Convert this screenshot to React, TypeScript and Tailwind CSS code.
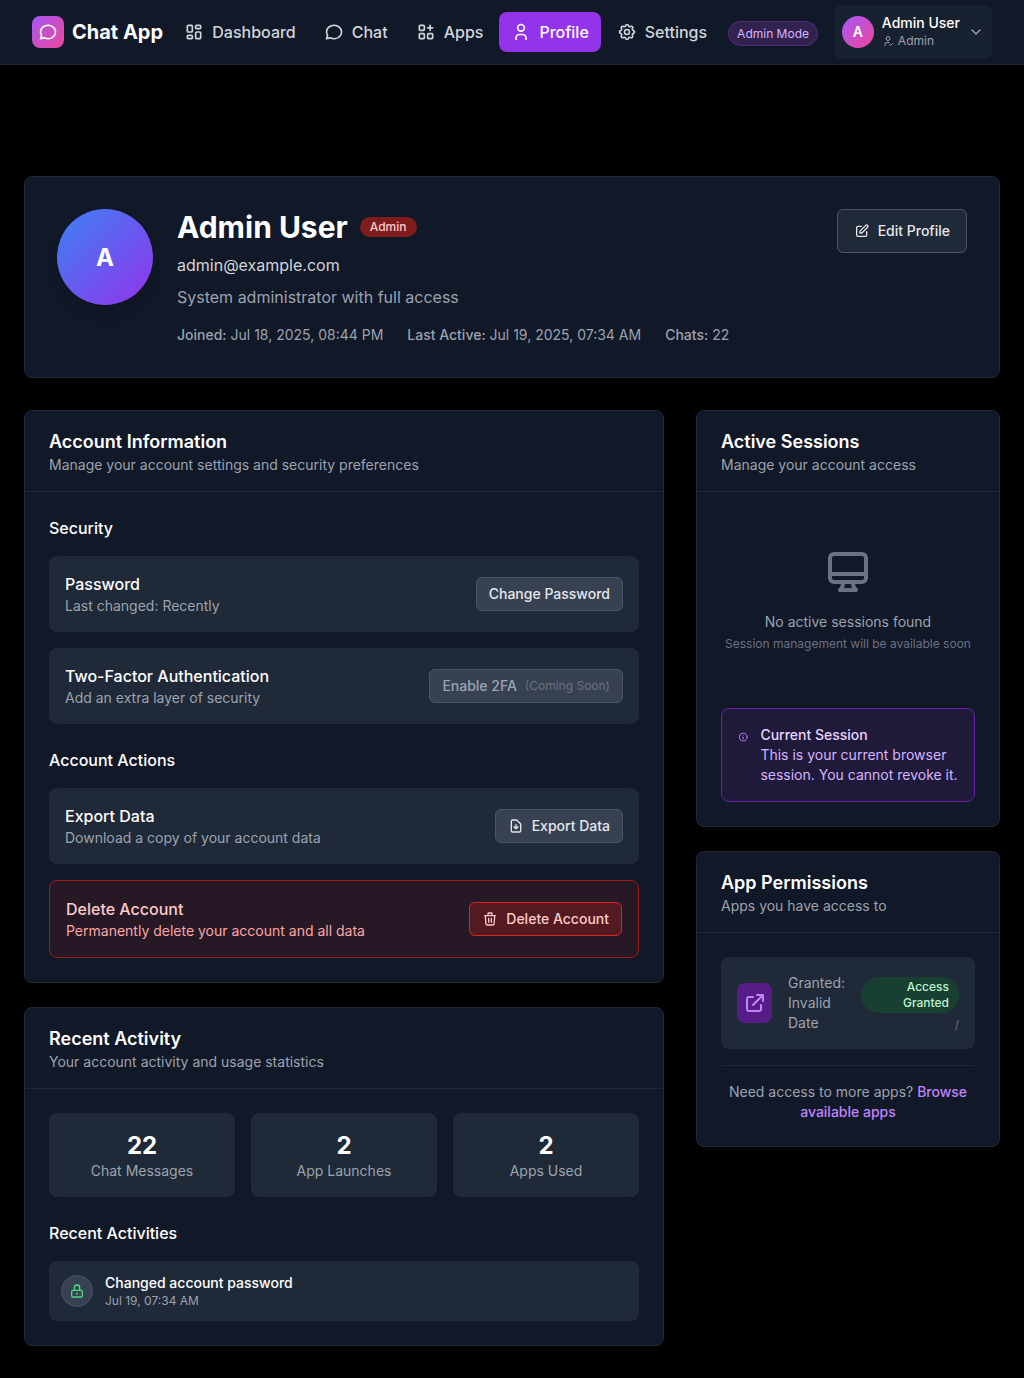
import type { ReactNode } from "react";
import {
  HiOutlineDesktopComputer,
  HiOutlineDocumentDownload,
  HiOutlineExternalLink,
  HiOutlineInformationCircle,
  HiOutlineLockClosed,
  HiOutlinePencilAlt,
  HiOutlineTrash,
} from "react-icons/hi";
import {
  TbApps,
  TbChevronDown,
  TbLayoutDashboard,
  TbMessageCircle,
  TbSettings,
  TbUser,
  TbUserCheck,
} from "react-icons/tb";

const navItems = [
  { label: "Dashboard", Icon: TbLayoutDashboard, active: false },
  { label: "Chat", Icon: TbMessageCircle, active: false },
  { label: "Apps", Icon: TbApps, active: false },
  { label: "Profile", Icon: TbUser, active: true },
  { label: "Settings", Icon: TbSettings, active: false },
];

const profileFacts = [
  { label: "Joined:", value: "Jul 18, 2025, 08:44 PM" },
  { label: "Last Active:", value: "Jul 19, 2025, 07:34 AM" },
  { label: "Chats:", value: "22" },
];

const stats = [
  { value: "22", label: "Chat Messages" },
  { value: "2", label: "App Launches" },
  { value: "2", label: "Apps Used" },
];

function Navbar() {
  return (
    <nav className="flex h-[65px] items-center border-b border-[#1f2937] bg-[#111827] px-8">
      <div className="flex w-[140.3px] shrink-0 items-center gap-2">
        <div className="flex size-8 items-center justify-center rounded-lg bg-linear-to-br/srgb from-[#a855f7] to-[#ec4899]">
          <TbMessageCircle className="size-5 text-white" />
        </div>
        <span className="text-xl font-bold whitespace-nowrap text-white">Chat App</span>
      </div>
      <div className="flex shrink-0 items-center gap-1">
        {navItems.map(({ label, Icon, active }) => (
          <a
            key={label}
            className={
              active
                ? "flex items-center gap-2 rounded-lg bg-[#9333ea] px-3 py-2 font-medium text-white"
                : "flex items-center gap-2 rounded-lg px-3 py-2 font-medium text-[#d1d5db]"
            }
          >
            <Icon className="size-5" />
            {label}
          </a>
        ))}
      </div>
      <div className="ml-auto flex shrink-0 items-center gap-4">
        <span className="mt-[3px] rounded-full border border-[#4f2d7a] bg-[#31224f] px-2 py-[3.5px] text-xs text-[#d8b4fe]">
          Admin Mode
        </span>
        <div className="flex h-[54px] w-[158px] items-center gap-2 rounded-lg bg-[#1f2937]/50 px-2">
          <div className="flex size-8 items-center justify-center rounded-full bg-linear-to-br/srgb from-[#a855f7] to-[#ec4899] text-sm font-semibold text-white">
            A
          </div>
          <div className="pb-0.5 whitespace-nowrap">
            <p className="text-sm font-medium text-white">Admin User</p>
            <p className="flex items-center gap-1 text-xs text-[#9ca3af]">
              <TbUserCheck className="size-3" />
              Admin
            </p>
          </div>
          <TbChevronDown className="ml-auto size-4 shrink-0 text-[#9ca3af]" />
        </div>
      </div>
    </nav>
  );
}

function Card({ title, subtitle, children }: { title: string; subtitle: string; children: ReactNode }) {
  return (
    <section className="rounded-lg border border-[#1f2937] bg-[#111827]">
      <header className="border-b border-[#1f2937] px-6 py-4">
        <h2 className="pt-px text-lg leading-[27px] font-semibold text-white">{title}</h2>
        <p className="text-sm text-[#9ca3af]">{subtitle}</p>
      </header>
      <div className="p-6">{children}</div>
    </section>
  );
}

function SettingRow({ title, text, children }: { title: string; text: string; children: ReactNode }) {
  return (
    <div className="flex items-center justify-between rounded-lg bg-[#1f2937] p-4">
      <div>
        <h4 className="font-medium text-white">{title}</h4>
        <p className="text-sm text-[#9ca3af]">{text}</p>
      </div>
      {children}
    </div>
  );
}

function ProfileHeader() {
  return (
    <section className="flex items-start rounded-lg border border-[#1f2937] bg-[#111827] p-8">
      <div className="flex size-24 items-center justify-center rounded-full bg-linear-to-br/srgb from-[#3b82f6] to-[#9333ea] pt-0.5 text-2xl font-bold text-white shadow-lg">
        A
      </div>
      <div className="ml-6 flex-1">
        <div className="flex items-center gap-3">
          <h1 className="text-3xl font-bold text-white">Admin User</h1>
          <span className="rounded-full bg-[#7f1d1d] px-2.5 py-0.5 text-xs font-medium text-[#fecaca]">Admin</span>
        </div>
        <p className="mt-2 text-[#d1d5db]">admin@example.com</p>
        <p className="mt-2 text-[#9ca3af]">System administrator with full access</p>
        <div className="mt-4 flex gap-6 text-sm text-[#9ca3af]">
          {profileFacts.map((fact) => (
            <p key={fact.label}>
              <span className="font-medium">{fact.label}</span> {fact.value}
            </p>
          ))}
        </div>
      </div>
      <button className="flex items-center gap-2 rounded-md border border-[#4b5563] bg-[#1f2937] px-4 py-[11px] text-sm font-medium text-[#e5e7eb]">
        <HiOutlinePencilAlt className="size-4" />
        Edit Profile
      </button>
    </section>
  );
}

function AccountCard() {
  return (
    <Card title="Account Information" subtitle="Manage your account settings and security preferences">
      <h3 className="font-medium text-white">Security</h3>
      <div className="mt-4 space-y-4">
        <SettingRow title="Password" text="Last changed: Recently">
          <button className="rounded-md border border-[#4b5563] bg-[#374151] px-3 py-1.5 text-sm font-medium text-[#e5e7eb]">
            Change Password
          </button>
        </SettingRow>
        <SettingRow title="Two-Factor Authentication" text="Add an extra layer of security">
          <button className="flex items-center gap-2 rounded-md border border-[#4b5563] bg-[#374151] px-3 py-1.5 text-sm font-medium text-[#9ca3af]">
            Enable 2FA <span className="text-xs font-normal text-[#6b7280]">(Coming Soon)</span>
          </button>
        </SettingRow>
      </div>
      <h3 className="mt-6 font-medium text-white">Account Actions</h3>
      <div className="mt-4 space-y-4">
        <SettingRow title="Export Data" text="Download a copy of your account data">
          <button className="flex items-center gap-2 rounded-md border border-[#4b5563] bg-[#374151] px-3 py-1.5 text-sm font-medium text-[#e5e7eb]">
            <HiOutlineDocumentDownload className="size-4" />
            Export Data
          </button>
        </SettingRow>
        <div className="flex items-center justify-between rounded-lg border border-[#991b1b] bg-[#7f1d1d]/20 p-4">
          <div>
            <h4 className="font-medium text-[#fecaca]">Delete Account</h4>
            <p className="text-sm text-[#fca5a5]">Permanently delete your account and all data</p>
          </div>
          <button className="flex items-center gap-2 rounded-md border border-[#dc2626] bg-[#7f1d1d]/50 px-3 py-1.5 text-sm font-medium text-[#fecaca]">
            <HiOutlineTrash className="size-4" />
            Delete Account
          </button>
        </div>
      </div>
    </Card>
  );
}

function ActivityCard() {
  return (
    <Card title="Recent Activity" subtitle="Your account activity and usage statistics">
      <div className="grid grid-cols-3 gap-4">
        {stats.map((stat) => (
          <div key={stat.label} className="rounded-lg bg-[#1f2937] p-4 text-center">
            <p className="pt-px text-2xl leading-[31px] font-bold text-white">{stat.value}</p>
            <p className="text-sm text-[#9ca3af]">{stat.label}</p>
          </div>
        ))}
      </div>
      <h3 className="mt-6 font-medium text-white">Recent Activities</h3>
      <div className="mt-4 flex items-center gap-3 rounded-lg bg-[#1f2937] p-3">
        <div className="flex size-8 items-center justify-center rounded-full border border-[#4b5563] bg-[#374151]">
          <HiOutlineLockClosed className="size-4 text-[#4ade80]" />
        </div>
        <div>
          <p className="text-sm font-medium text-white">Changed account password</p>
          <p className="text-xs text-[#9ca3af]">Jul 19, 07:34 AM</p>
        </div>
      </div>
    </Card>
  );
}

function SessionsCard() {
  return (
    <Card title="Active Sessions" subtitle="Manage your account access">
      <div className="flex flex-col items-center py-8">
        <HiOutlineDesktopComputer className="size-12 text-[#6b7280]" />
        <p className="mt-4 text-sm text-[#9ca3af]">No active sessions found</p>
        <p className="mt-1 text-xs whitespace-nowrap text-[#6b7280]">Session management will be available soon</p>
      </div>
      <div className="mt-6 flex gap-3 rounded-lg border border-[#6b21a8] bg-[#581c87]/20 p-4">
        <HiOutlineInformationCircle className="mt-0.5 h-5 w-[10.4px] shrink-0 text-[#c084fc]" />
        <div className="text-sm">
          <p className="font-medium text-[#e9d5ff]">Current Session</p>
          <p className="text-[#d8b4fe]">This is your current browser session. You cannot revoke it.</p>
        </div>
      </div>
    </Card>
  );
}

function PermissionsCard() {
  return (
    <Card title="App Permissions" subtitle="Apps you have access to">
      <div className="flex items-center rounded-lg bg-[#1f2937] p-4">
        <div className="flex h-10 w-[35px] shrink-0 items-center justify-center rounded-lg bg-[#581c87]">
          <HiOutlineExternalLink className="size-6 shrink-0 text-[#c084fc]" />
        </div>
        <p className="ml-4 w-[58px] text-sm text-[#9ca3af]">Granted: Invalid Date</p>
        <div className="ml-auto w-[98px] pt-1 text-right text-xs">
          <p className="rounded-full bg-[#14532d]/50 py-0.5 pr-2.5 pl-8 font-medium text-[#bbf7d0]">Access Granted</p>
          <p className="mt-1 text-[#6b7280]">/</p>
        </div>
      </div>
      <p className="mt-4 border-t border-[#1f2937] pt-4 text-center text-sm text-[#9ca3af]">
        Need access to more apps? <a className="font-medium text-[#c084fc]">Browse available apps</a>
      </p>
    </Card>
  );
}

export default function App() {
  return (
    <div className="min-h-[1378px] bg-black font-['Inter',sans-serif] antialiased">
      <Navbar />
      <main className="px-6 pt-[111px] pb-8">
        <ProfileHeader />
        <div className="mt-8 grid grid-cols-[640px_304px] items-start gap-8">
          <div className="space-y-6">
            <AccountCard />
            <ActivityCard />
          </div>
          <div className="space-y-6">
            <SessionsCard />
            <PermissionsCard />
          </div>
        </div>
      </main>
    </div>
  );
}
